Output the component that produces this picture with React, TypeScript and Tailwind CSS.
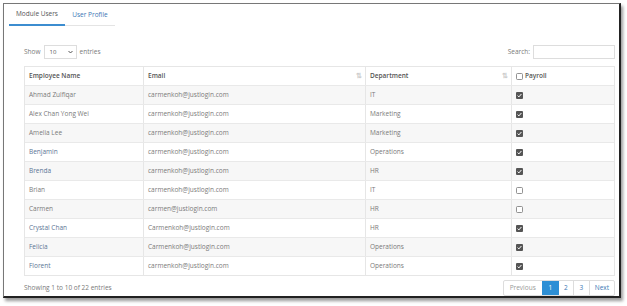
import React from 'react';

interface Row {
  name: string;
  email: string;
  dept: string;
  payroll: boolean;
  link?: boolean;
}

const rows: Row[] = [
  { name: 'Ahmad Zulfiqar', email: 'carmenkoh@justlogin.com', dept: 'IT', payroll: true },
  { name: 'Alex Chan Yong Wei', email: 'carmenkoh@justlogin.com', dept: 'Marketing', payroll: true },
  { name: 'Amelia Lee', email: 'carmenkoh@justlogin.com', dept: 'Marketing', payroll: true },
  { name: 'Benjamin', email: 'carmenkoh@justlogin.com', dept: 'Operations', payroll: true, link: true },
  { name: 'Brenda', email: 'carmenkoh@justlogin.com', dept: 'HR', payroll: true, link: true },
  { name: 'Brian', email: 'carmenkoh@justlogin.com', dept: 'IT', payroll: false },
  { name: 'Carmen', email: 'carmen@justlogin.com', dept: 'HR', payroll: false },
  { name: 'Crystal Chan', email: 'Carmenkoh@justlogin.com', dept: 'HR', payroll: true, link: true },
  { name: 'Felicia', email: 'Carmenkoh@justlogin.com', dept: 'Operations', payroll: true, link: true },
  { name: 'Florent', email: 'carmenkoh@justlogin.com', dept: 'Operations', payroll: true, link: true },
];

const Check: React.FC<{ on: boolean }> = ({ on }) =>
  on ? (
    <svg width="7" height="7" viewBox="0 0 7 7">
      <rect x="0" y="0" width="7" height="7" rx="1" fill="#555" />
      <path d="M1.6 3.6 L2.9 4.9 L5.4 2" stroke="#fff" strokeWidth="1" fill="none" />
    </svg>
  ) : (
    <svg width="7" height="7" viewBox="0 0 7 7">
      <rect x="0.5" y="0.5" width="6" height="6" rx="1" fill="#fff" stroke="#777" strokeWidth="0.8" />
    </svg>
  );

const SortIcon = () => <span className="text-[7px] text-[#ccc] tracking-[-1px]">⇅</span>;

const App: React.FC = () => {
  return (
    <div className="w-[627px] h-[306px] bg-white font-['Open_Sans',sans-serif] text-[6.5px] text-[#7a7a7a]">
      <div className="ml-[3px] pt-[3px]">
        <div className="w-[618px] h-[295px] border-l border-t border-[#777] border-r-2 border-b-2 border-r-[#222] border-b-[#222] shadow-[2px_3px_3px_rgba(0,0,0,0.4)] flex flex-col">
          {/* Tabs */}
          <div className="flex pl-[5px]">
            <div className="h-[22px] w-[56px] flex items-center justify-center border-b-2 border-[#3c8dd0] text-[#555]">
              Module Users
            </div>
            <div className="h-[22px] w-[50px] flex items-center justify-center border-b border-[#e4e4e4] text-[#3a78b5]">
              User Profile
            </div>
          </div>

          <div className="pl-[20px] pr-[4px] mt-[19px] flex flex-col">
            {/* Controls */}
            <div className="flex items-center justify-between h-[14px]">
              <div className="flex items-center gap-[3px]">
                <span>Show</span>
                <div className="w-[33px] h-[14px] border border-[#ddd] flex items-center justify-between pl-[5px] pr-[3px] text-[#555] text-[6px]">
                  <span>10</span>
                  <svg width="5" height="4" viewBox="0 0 5 4">
                    <path d="M0.5 1 L2.5 3 L4.5 1" stroke="#444" strokeWidth="0.9" fill="none" />
                  </svg>
                </div>
                <span>entries</span>
              </div>
              <div className="flex items-center gap-[3px]">
                <span>Search:</span>
                <div className="w-[82px] h-[14px] border border-[#ddd]" />
              </div>
            </div>

            {/* Table */}
            <div className="mt-[7px] border border-[#e6e6e6]">
              <div className="grid grid-cols-[118px_222px_146px_1fr] h-[18px] font-semibold text-[#555]">
                <div className="flex items-center px-[4px]">Employee Name</div>
                <div className="flex items-center justify-between px-[4px] border-l border-[#e6e6e6]">
                  <span>Email</span>
                  <SortIcon />
                </div>
                <div className="flex items-center justify-between px-[4px] border-l border-[#e6e6e6]">
                  <span>Department</span>
                  <SortIcon />
                </div>
                <div className="flex items-center gap-[2px] px-[4px] border-l border-[#e6e6e6]">
                  <Check on={false} />
                  <span>Payroll</span>
                </div>
              </div>
              {rows.map((r, i) => (
                <div
                  key={r.name}
                  className={`grid grid-cols-[118px_222px_146px_1fr] h-[19px] border-t border-[#e9e9e9] ${
                    i % 2 === 0 ? 'bg-[#f7f7f7]' : 'bg-white'
                  }`}
                >
                  <div className={`flex items-center px-[4px] ${r.link ? 'text-[#5b7595]' : ''}`}>{r.name}</div>
                  <div className="flex items-center px-[4px] border-l border-[#e6e6e6]">{r.email}</div>
                  <div className="flex items-center px-[4px] border-l border-[#e6e6e6]">{r.dept}</div>
                  <div className="flex items-center px-[4px] border-l border-[#e6e6e6]">
                    <Check on={r.payroll} />
                  </div>
                </div>
              ))}
            </div>

            {/* Footer */}
            <div className="flex items-center justify-between mt-[4px]">
              <span>Showing 1 to 10 of 22 entries</span>
              <div className="flex h-[16px] border border-[#ddd] rounded-[2px]">
                <div className="flex items-center px-[6px] text-[#999]">Previous</div>
                <div className="flex items-center justify-center w-[17px] bg-[#2d8fd5] text-white">1</div>
                <div className="flex items-center justify-center w-[15px] border-r border-[#ddd] text-[#3a78b5]">2</div>
                <div className="flex items-center justify-center w-[16px] border-r border-[#ddd] text-[#3a78b5]">3</div>
                <div className="flex items-center px-[5px] text-[#3a78b5]">Next</div>
              </div>
            </div>
          </div>
        </div>
      </div>
    </div>
  );
};

export default App;
